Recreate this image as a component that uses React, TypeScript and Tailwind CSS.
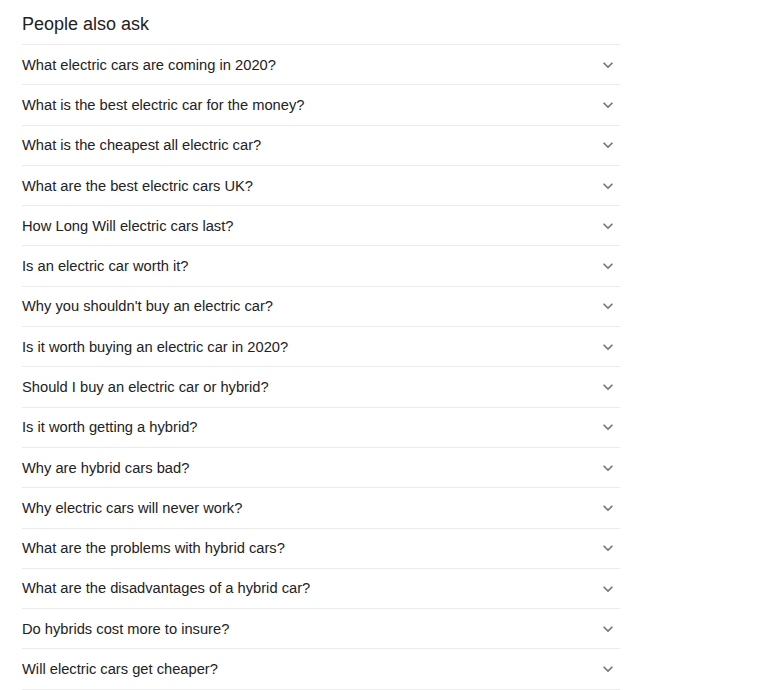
import React from 'react';

const questions = [
  'What electric cars are coming in 2020?',
  'What is the best electric car for the money?',
  'What is the cheapest all electric car?',
  'What are the best electric cars UK?',
  'How Long Will electric cars last?',
  'Is an electric car worth it?',
  "Why you shouldn't buy an electric car?",
  'Is it worth buying an electric car in 2020?',
  'Should I buy an electric car or hybrid?',
  'Is it worth getting a hybrid?',
  'Why are hybrid cars bad?',
  'Why electric cars will never work?',
  'What are the problems with hybrid cars?',
  'What are the disadvantages of a hybrid car?',
  'Do hybrids cost more to insure?',
  'Will electric cars get cheaper?',
];

const Chevron = () => (
  <svg viewBox="0 0 24 24" className="w-[20px] h-[20px] text-[#70757a]" fill="currentColor">
    <path d="M16.59 8.59 12 13.17 7.41 8.59 6 10l6 6 6-6z" />
  </svg>
);

export default function App() {
  return (
    <div className="min-h-screen bg-white pl-[22px] pt-[13px]" style={{ fontFamily: '"Liberation Sans", Arial, sans-serif' }}>
      <div className="w-[598px]">
        <h2 className="text-[18px] leading-[22px] text-[#222] h-[31px]">People also ask</h2>
        <div className="border-b border-[#ebebeb]">
          {questions.map((q) => (
            <div
              key={q}
              className="h-[40.3px] border-t border-[#ebebeb] flex items-center justify-between"
            >
              <span className="text-[14.7px] text-[#222]">{q}</span>
              <span className="mr-[2px]">
                <Chevron />
              </span>
            </div>
          ))}
        </div>
      </div>
    </div>
  );
}
